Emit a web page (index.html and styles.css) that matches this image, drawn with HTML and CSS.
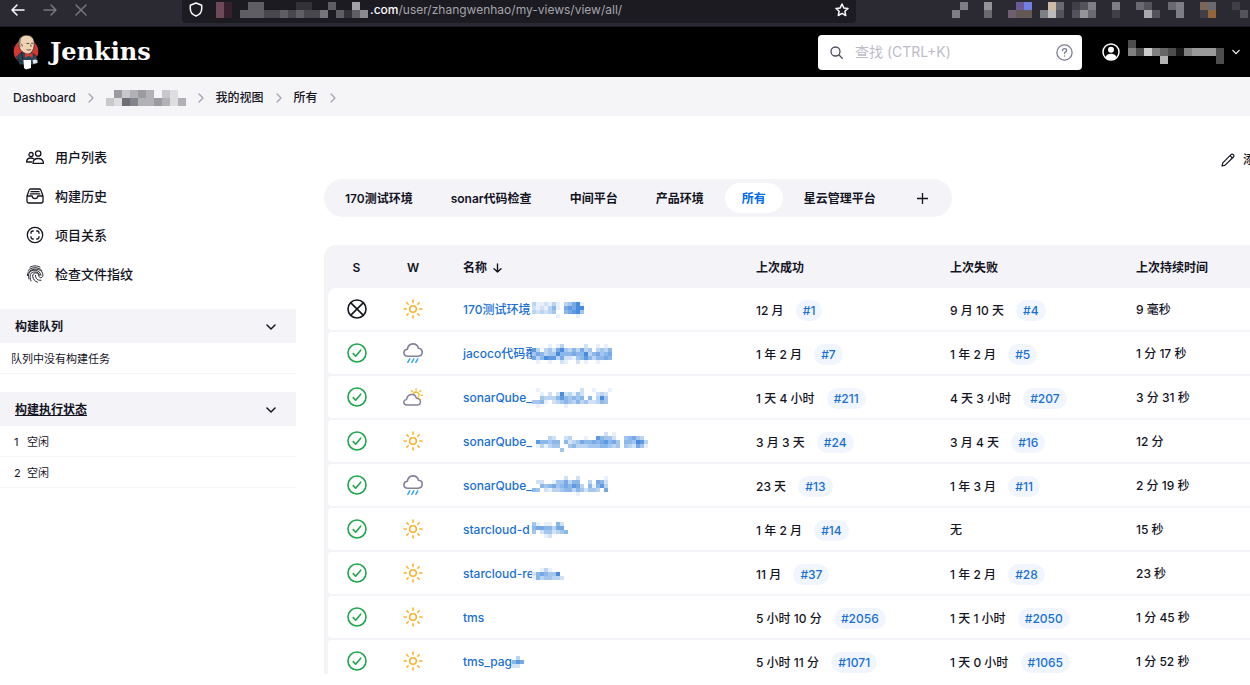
FILE: index.html
```html
<!DOCTYPE html>
<html lang="zh-CN">
<head>
    <meta charset="UTF-8">
    <meta name="viewport" content="width=device-width, initial-scale=1.0">
    <title>所有 [Jenkins]</title>
    <link rel="stylesheet" href="styles.css">
</head>
<body>
    <svg class="symbols" aria-hidden="true">
        <symbol id="chevron-right" viewBox="0 0 6 10"><path d="M1 1l4 4-4 4" fill="none" stroke="currentColor" stroke-width="1.3" stroke-linecap="round" stroke-linejoin="round"/></symbol>
        <symbol id="chevron-down" viewBox="0 0 10 6"><path d="M1 1l4 4 4-4" fill="none" stroke="currentColor" stroke-width="1.5" stroke-linecap="round" stroke-linejoin="round"/></symbol>
        <symbol id="ok" viewBox="0 0 20 20"><g fill="none" stroke="#1ea64b" stroke-width="1.6" stroke-linecap="round" stroke-linejoin="round"><circle cx="10" cy="10" r="9"/><path d="M6.2 10.6l2.5 2.6 5-6"/></g></symbol>
        <symbol id="aborted" viewBox="0 0 20 20"><g fill="none" stroke="#14141f" stroke-width="1.6" stroke-linecap="round"><circle cx="10" cy="10" r="9"/><path d="M4.6 4.6l10.8 10.8M15.4 4.6L4.6 15.4"/></g></symbol>
        <symbol id="sunny" viewBox="0 0 20 20"><g fill="none" stroke="#fcb32c" stroke-width="1.6" stroke-linecap="round"><circle cx="10" cy="10" r="3.3"/><path d="M10 1v2.2M10 16.8V19M1 10h2.2M16.8 10H19M3.8 3.8l1.4 1.4M14.8 14.8l1.4 1.4M3.8 16.2l1.4-1.4M14.8 5.2l1.4-1.4"/></g></symbol>
        <symbol id="rainy" viewBox="0 0 20 20"><path d="M5 13.2C2.500 13.200.9 11.700.9 9.800c0-1.900 1.300-3.200 3.400-3.500C4.900 2.900 7.100.9 10 .9c2.700 0 4.700 1.600 5.400 4.300 2.400.2 3.800 1.700 3.800 3.900 0 2.400-1.600 4.100-4.100 4.100z" fill="none" stroke="#82819a" stroke-width="1.6" stroke-linejoin="round"/><path d="M6.800 15.800l-2 3.500M10.800 15.800l-2 3.500M14.800 15.800l-2 3.500" fill="none" stroke="#36a6e8" stroke-width="1.500" stroke-linecap="round"/></symbol>
        <symbol id="cloudy" viewBox="0 0 22 20"><g fill="none" stroke-linecap="round" stroke-linejoin="round"><path d="M11.300 6.200a3.400 3.400 0 1 1 5 4.400M14.400 1v1.300M9.300 3.200l1 .9M19.500 3.200l-1 .9M20 8.200h1.400M19.300 13l-1-.9" stroke="#fcb32c" stroke-width="1.500"/><path d="M4.500 18.900C2.200 18.900.9 17.600.9 15.900c0-1.700 1.200-2.800 3-3C4.400 9.200 6.700 7.200 9.600 7.200c2.800 0 4.600 1.700 5.100 4.300 2.500.1 4.500 1.400 4.500 3.800 0 2.200-1.500 3.600-3.800 3.600z" stroke="#82819a" stroke-width="1.600"/></g></symbol>
    </svg>

    <div class="browser-bar">
        <div class="browser-nav">
            <button class="nav-button" aria-label="后退"><svg width="14" height="12" viewBox="0 0 14 12"><path d="M13 6H1M6 1L1 6l5 5"/></svg></button>
            <button class="nav-button dim" aria-label="前进"><svg width="14" height="12" viewBox="0 0 14 12"><path d="M1 6h12M8 1l5 5-5 5"/></svg></button>
            <button class="nav-button dim" aria-label="停止"><svg width="12" height="12" viewBox="0 0 12 12"><path d="M1 1l10 10M11 1L1 11"/></svg></button>
        </div>
        <div class="address">
            <svg class="shield" width="14" height="15" viewBox="0 0 14 15"><path d="M7 1l5.700 2.200v3.600c0 3.200-2.300 6-5.700 7.200-3.400-1.200-5.700-4-5.700-7.200V3.200z"/></svg>
            <span class="mosaic" data-size="8" data-rows="md..33....11..3..6.|md.33322323224.3135"></span>
            <span class="url"><b>.com</b>/user/zhangwenhao/my-views/view/all/</span>
            <button class="star" aria-label="收藏"><svg width="14" height="14" viewBox="0 0 14 14"><path d="M7 1l1.800 3.900 4.200.5-3.100 2.900.8 4.200L7 10.400l-3.700 2.100.8-4.200L1 5.400l4.200-.5z"/></svg></button>
        </div>
        <span class="mosaic extensions" data-size="8" data-rows=".4..5...pb..t3.124..4..32..34..n3..1.|4...3..qrr.4g2.253..1...62..4..1o...2"></span>
    </div>

    <header class="page-header">
        <a class="logo" href="#" aria-label="Jenkins">
            <svg width="26" height="36" viewBox="0 0 26 36">
                <circle cx="13" cy="17.500" r="12.300" fill="#d33833"/>
                <path d="M3.500 23L8 18.500h10.500L23.500 22l1 5.500-3.500 3H6.500z" fill="#2c4658" stroke="#10181f" stroke-width=".6"/>
                <path d="M5.800 8C6.500 3.500 9.800 1 14 1.200c4.200.2 7 3 7.200 7.300.2 4.500-.8 8.300-3.800 10.800-1.600 1.200-4 .8-6.500-.6C7.600 17 6.200 14 5.800 11z" fill="#efd2b2" stroke="#2b2523" stroke-width=".7"/>
                <path d="M5.500 11C4.900 7.500 6 4.500 8.800 2.800 7.700 5 7.400 6.500 7.600 8.200c-.6 1.800-.5 3.300.4 5-1.300-.2-2.100-1-2.500-2.200z" fill="#81746a"/>
                <path d="M13.500 9.500h2.800M18.200 9.300h2M13.500 15.500c1.500.8 3.500.7 4.500 0M17.600 10.500l.6 2.300M8.200 10.500c.8-.5 1.500.5.800 2" fill="none" stroke="#3a2d28" stroke-width=".8"/>
                <path d="M15.800 20.500L12 19v4.500l3.800-1.500 3.800 1.500V19z" fill="#e03a34"/>
                <path d="M10.500 26h7.500v8l-5 1.500-2-1.500z" fill="#fff"/>
                <path d="M19.500 26.500c1.500-1.500 3.500-1.500 5 0v2.500l-4 1z" fill="#dfe3e8"/>
                <path d="M8.500 19l1.500 7M4.800 25l4.500 3.500" fill="none" stroke="#10181f" stroke-width=".8"/>
            </svg>
            <span class="logo-text">Jenkins</span>
        </a>
        <div class="search">
            <svg width="13" height="13" viewBox="0 0 13 13"><circle cx="5.500" cy="5.500" r="4.500"/><path d="M9 9l3.300 3.300"/></svg>
            <input type="text" id="search-box" placeholder="查找 (CTRL+K)" aria-label="查找">
            <button class="help" aria-label="帮助"><svg width="17" height="17" viewBox="0 0 17 17"><circle cx="8.500" cy="8.500" r="7.600"/><path d="M6.500 6.600c0-1.200.9-1.900 2.100-1.900s2 .7 2 1.700c0 1.500-2.100 1.500-2.100 3.200"/><path d="M8.500 11.900v.2"/></svg></button>
        </div>
        <button class="user" aria-label="用户菜单">
            <svg width="18" height="18" viewBox="0 0 18 18"><circle cx="9" cy="9" r="8" fill="none" stroke="#fff" stroke-width="1.500"/><circle cx="9" cy="6.800" r="3" fill="#fff"/><path d="M3.600 14c.8-2.300 2.800-3.300 5.400-3.300s4.600 1 5.400 3.300C13 15.800 11 16.700 9 16.700S5 15.800 3.600 14z" fill="#fff"/></svg>
            <span class="mosaic" data-size="8" data-rows="3...........|538543156663|....7......3"></span>
            <svg width="8" height="6"><use href="#chevron-down"/></svg>
        </button>
    </header>

    <nav class="breadcrumbs">
        <a href="#">Dashboard</a>
        <svg><use href="#chevron-right"/></svg>
        <a class="mosaic" href="#" aria-label="用户" data-size="8" data-rows=".423430210|2165334313"></a>
        <svg><use href="#chevron-right"/></svg>
        <a href="#">我的视图</a>
        <svg><use href="#chevron-right"/></svg>
        <a href="#">所有</a>
        <svg><use href="#chevron-right"/></svg>
    </nav>

    <div class="page-body">
        <aside class="side-panel">
            <nav class="tasks">
                <a class="task" href="#">
                    <svg viewBox="0 0 18 18"><circle cx="12.200" cy="5.500" r="2.700"/><path d="M6.900 15.300c.2-3 2.300-4.800 5.300-4.800s5.100 1.800 5.300 4.800z"/><circle cx="5" cy="6.600" r="2.100"/><path d="M5.600 14H.6c.1-2.600 1.700-4 4.300-4 1.100 0 1.900.2 2.700.7"/></svg>
                    <span>用户列表</span>
                </a>
                <a class="task" href="#">
                    <svg viewBox="0 0 18 18"><path d="M1 9l2-5.600C3.300 2.500 3.800 2 4.700 2h8.600c.9 0 1.400.5 1.700 1.400L17 9v5c0 1.200-.8 2-2 2H3c-1.200 0-2-.8-2-2zM1 9h5.200c.2 1.700 1.300 2.600 2.800 2.600s2.600-.9 2.800-2.600H17M5 4.700h8M4.200 6.900h9.600"/></svg>
                    <span>构建历史</span>
                </a>
                <a class="task" href="#">
                    <svg viewBox="0 0 18 18"><circle cx="9" cy="9" r="7.700"/><path d="M7.300 5H6.700C5.600 5 5 5.600 5 6.700v.6M10.700 5h.6c1.100 0 1.700.6 1.700 1.700v.6M7.300 13h-.6C5.600 13 5 12.400 5 11.300v-.6M10.700 13h.6c1.100 0 1.700-.6 1.700-1.700v-.6"/></svg>
                    <span>项目关系</span>
                </a>
                <a class="task" href="#">
                    <svg class="fingerprint" viewBox="0 0 18 18"><path d="M4 2.200C7 .4 11 .4 14 2.200M2 5.700C5.300 1.600 12.700 1.600 16 5.700M1.300 10.600C.9 2.400 17.200 1.700 16.900 10.300c0 2-1.900 3-3.300 2-.8-.6-.8-1.300-1-2.300-.6-3-6-2.700-5.900 1 .1 3.300 2.200 5.300 4.800 6.200M3 14c-.5-1.800-.8-3.500-.2-5.200 1.800-5.200 11.500-4.900 12.200 1.500M5 15.900c-.8-2.200-1.200-4.200-.7-6.200 1.300-4 8.900-3.600 9.300.4M9.500 10.300c-.1 3.200 1.800 5.300 5.500 5"/></svg>
                    <span>检查文件指纹</span>
                </a>
            </nav>

            <section class="pane">
                <div class="pane-header">
                    <h2>构建队列</h2>
                    <button aria-label="折叠"><svg width="10" height="6"><use href="#chevron-down"/></svg></button>
                </div>
                <p class="pane-empty">队列中没有构建任务</p>
            </section>

            <section class="pane">
                <div class="pane-header">
                    <h2><a href="#">构建执行状态</a></h2>
                    <button aria-label="折叠"><svg width="10" height="6"><use href="#chevron-down"/></svg></button>
                </div>
                <ul class="executors">
                    <li><span>1</span>空闲</li>
                    <li><span>2</span>空闲</li>
                </ul>
            </section>
        </aside>

        <main class="main-panel">
            <div class="description">
                <a href="#">
                    <svg width="14" height="14" viewBox="0 0 14 14"><path d="M1 13l.8-3.200L10 1.600c.7-.7 1.500-.7 2.100-.1l.4.4c.6.6.6 1.400-.1 2.100L4.200 12.200zM9 2.600L11.400 5"/></svg>
                    <span>添加说明</span>
                </a>
            </div>

            <nav class="tabs">
                <a href="#">170测试环境</a>
                <a href="#">sonar代码检查</a>
                <a href="#">中间平台</a>
                <a href="#">产品环境</a>
                <a class="active" href="#">所有</a>
                <a href="#">星云管理平台</a>
                <a class="add" href="#" aria-label="新建视图"><svg width="11" height="11" viewBox="0 0 11 11"><path d="M5.500 0v11M0 5.500h11"/></svg></a>
            </nav>

            <table class="projects">
                <colgroup>
                    <col class="col-status">
                    <col class="col-weather">
                    <col class="col-name">
                    <col class="col-success">
                    <col class="col-failure">
                    <col>
                </colgroup>
                <thead>
                    <tr>
                        <th class="icon">S</th>
                        <th class="icon">W</th>
                        <th>名称 <svg class="sort" width="9" height="10" viewBox="0 0 9 10"><path d="M4.500 1v8M1 5.700L4.500 9 8 5.700"/></svg></th>
                        <th>上次成功</th>
                        <th>上次失败</th>
                        <th>上次持续时间</th>
                    </tr>
                </thead>
                <tbody>
                    <tr>
                        <td class="icon"><svg><use href="#aborted"/></svg></td>
                        <td class="icon"><svg><use href="#sunny"/></svg></td>
                        <td><a class="name" href="#"><span class="visible">170测试环境</span><span class="mosaic" data-size="4" data-rows="3112131.34681|2121351.67688|323234..56784|......1....1."></span></a></td>
                        <td>12 月 <a class="build" href="#">#1</a></td>
                        <td>9 月 10 天 <a class="build" href="#">#4</a></td>
                        <td>9 毫秒</td>
                    </tr>
                    <tr>
                        <td class="icon"><svg><use href="#ok"/></svg></td>
                        <td class="icon"><svg><use href="#rainy"/></svg></td>
                        <td><a class="name" href="#"><span class="visible">jacoco代码覆</span><span class="mosaic" data-size="4" data-rows="....1.13.....2..1.1.|73.342684353634.3435|46534485556558356456|63587736221457535565|.1..1..21..2.1..1..."></span></a></td>
                        <td>1 年 2 月 <a class="build" href="#">#7</a></td>
                        <td>1 年 2 月 <a class="build" href="#">#5</a></td>
                        <td>1 分 17 秒</td>
                    </tr>
                    <tr>
                        <td class="icon"><svg><use href="#ok"/></svg></td>
                        <td class="icon"><svg><use href="#cloudy"/></svg></td>
                        <td><a class="name" href="#"><span class="visible">sonarQube_</span><span class="mosaic" data-size="4" data-rows=".1..........2..1...1|..1.2.2823142...232.|..43335754545.5.384.|4451.23454353422354.|.1......1..........."></span></a></td>
                        <td>1 天 4 小时 <a class="build" href="#">#211</a></td>
                        <td>4 天 3 小时 <a class="build" href="#">#207</a></td>
                        <td>3 分 31 秒</td>
                    </tr>
                    <tr>
                        <td class="icon"><svg><use href="#ok"/></svg></td>
                        <td class="icon"><svg><use href="#sunny"/></svg></td>
                        <td><a class="name" href="#"><span class="visible">sonarQube_</span><span class="mosaic" data-size="4" data-rows="..................2.1........|....32..23...1..75442..45643.|.755455.52346556567564.554873|.131344..4533344455434.432641|.......4....................."></span></a></td>
                        <td>3 月 3 天 <a class="build" href="#">#24</a></td>
                        <td>3 月 4 天 <a class="build" href="#">#16</a></td>
                        <td>12 分</td>
                    </tr>
                    <tr>
                        <td class="icon"><svg><use href="#ok"/></svg></td>
                        <td class="icon"><svg><use href="#rainy"/></svg></td>
                        <td><a class="name" href="#"><span class="visible">sonarQube_</span><span class="mosaic" data-size="4" data-rows="........2..2......1|.22..1446355..3.652|..54564565763.51573|54.21334553542443.6|...........1......."></span></a></td>
                        <td>23 天 <a class="build" href="#">#13</a></td>
                        <td>1 年 3 月 <a class="build" href="#">#11</a></td>
                        <td>2 分 19 秒</td>
                    </tr>
                    <tr>
                        <td class="icon"><svg><use href="#ok"/></svg></td>
                        <td class="icon"><svg><use href="#sunny"/></svg></td>
                        <td><a class="name" href="#"><span class="visible">starcloud-d</span><span class="mosaic" data-size="4" data-rows="41.11.52.|56655366.|4.2442345|...12...."></span></a></td>
                        <td>1 年 2 月 <a class="build" href="#">#14</a></td>
                        <td>无</td>
                        <td>15 秒</td>
                    </tr>
                    <tr>
                        <td class="icon"><svg><use href="#ok"/></svg></td>
                        <td class="icon"><svg><use href="#sunny"/></svg></td>
                        <td><a class="name" href="#"><span class="visible">starcloud-re</span><span class="mosaic" data-size="4" data-rows="..131...|2565448.|15344332"></span></a></td>
                        <td>11 月 <a class="build" href="#">#37</a></td>
                        <td>1 年 2 月 <a class="build" href="#">#28</a></td>
                        <td>23 秒</td>
                    </tr>
                    <tr>
                        <td class="icon"><svg><use href="#ok"/></svg></td>
                        <td class="icon"><svg><use href="#sunny"/></svg></td>
                        <td><a class="name" href="#">tms</a></td>
                        <td>5 小时 10 分 <a class="build" href="#">#2056</a></td>
                        <td>1 天 1 小时 <a class="build" href="#">#2050</a></td>
                        <td>1 分 45 秒</td>
                    </tr>
                    <tr>
                        <td class="icon"><svg><use href="#ok"/></svg></td>
                        <td class="icon"><svg><use href="#sunny"/></svg></td>
                        <td><a class="name" href="#"><span class="visible short">tms_pag</span><span class="mosaic" data-size="4" data-rows=".3.|576|22."></span></a></td>
                        <td>5 小时 11 分 <a class="build" href="#">#1071</a></td>
                        <td>1 天 0 小时 <a class="build" href="#">#1065</a></td>
                        <td>1 分 52 秒</td>
                    </tr>
                </tbody>
            </table>
        </main>
    </div>

    <script src="mosaic.js"></script>
</body>
</html>
```

FILE: styles.css
```css
* {
    box-sizing: border-box;
}
body {
    margin: 0;
    padding-bottom: 11px;
    height: 100vh;
    display: flex;
    flex-direction: column;
    overflow: hidden;
    background-color: #fff;
    color: #14141f;
    font-family: Inter, "Noto Sans CJK SC", sans-serif;
    font-size: 12px;
    font-weight: 500;
    line-height: 18px;
}
a {
    color: inherit;
    text-decoration: none;
}
button {
    padding: 0;
    border: none;
    background: none;
    color: inherit;
    font: inherit;
    cursor: pointer;
}
svg {
    display: block;
    flex: none;
}
.symbols {
    position: absolute;
    width: 0;
    height: 0;
}
.mosaic {
    flex: none;
}

/* browser toolbar */
.browser-bar {
    flex: none;
    display: flex;
    align-items: flex-start;
    height: 27px;
    background-color: #2b2a33;
    border-bottom: 1px solid #1c1b22;
    color: #fbfbfe;
}
.browser-bar svg {
    fill: none;
    stroke: currentColor;
    stroke-width: 1.5;
    stroke-linecap: round;
    stroke-linejoin: round;
}
.browser-nav {
    display: flex;
    gap: 18px;
    width: 182px;
    padding: 4px 11px;
}
.nav-button.dim {
    color: #77767e;
}
.address {
    flex: 1;
    display: flex;
    align-items: center;
    height: 23px;
    padding: 0 7px 4px;
    background-color: #1c1b22;
    border-radius: 0 0 4px 4px;
}
.shield {
    margin-right: 13px;
}
.url {
    margin-left: 2px;
    color: #a5a5ab;
    font-weight: 400;
    white-space: nowrap;
}
.url b {
    color: #fbfbfe;
    font-weight: 500;
}
.star {
    margin-left: auto;
}
.extensions {
    margin: 2px 2px 0 96px;
}
.browser-bar .mosaic svg {
    stroke: none;
}
.mosaic svg {
    fill: currentColor;
}

/* header */
.page-header {
    flex: none;
    display: flex;
    align-items: center;
    height: 50px;
    padding: 0 10px 0 13px;
    background-color: #000;
    color: #fff;
}
.logo {
    display: flex;
    align-items: center;
    gap: 11px;
    margin-right: auto;
}
.logo-text {
    font-family: "DejaVu Serif", serif;
    font-size: 24px;
    font-weight: 700;
}
.search {
    display: flex;
    align-items: center;
    gap: 12px;
    width: 264px;
    height: 35px;
    margin-right: 20px;
    padding: 0 9px 0 12px;
    background-color: #fff;
    border-radius: 4px;
    color: #4d4d5c;
}
.search svg {
    fill: none;
    stroke: currentColor;
    stroke-width: 1.3;
    stroke-linecap: round;
}
.search input {
    flex: 1;
    min-width: 0;
    padding: 0;
    border: none;
    outline: none;
    font: inherit;
    font-size: 14px;
    font-weight: 400;
}
.search input::placeholder {
    color: #bcbcc8;
}
.help {
    color: #7b7b96;
}
.user {
    display: flex;
    align-items: center;
    gap: 8px;
}

/* breadcrumbs */
.breadcrumbs {
    flex: none;
    display: flex;
    align-items: center;
    gap: 12px;
    height: 39px;
    padding: 2px 13px 0;
    background-color: #f5f5f8;
}
.breadcrumbs > svg {
    width: 6px;
    height: 10px;
    color: #a3a3b5;
}

/* body */
.page-body {
    flex: 1;
    min-height: 0;
    display: flex;
    gap: 28px;
    overflow: hidden;
}
.side-panel {
    flex: none;
    width: 296px;
    padding-top: 21px;
}
.tasks {
    margin-bottom: 16px;
}
.task {
    display: flex;
    align-items: center;
    gap: 11px;
    height: 39px;
    padding-left: 26px;
    font-size: 13px;
}
.task svg {
    width: 18px;
    height: 18px;
    fill: none;
    stroke: currentColor;
    stroke-width: 1.3;
    stroke-linecap: round;
    stroke-linejoin: round;
}
.task .fingerprint {
    stroke-width: 0.9;
}
.pane {
    margin-bottom: 18px;
}
.pane-header {
    display: flex;
    align-items: center;
    justify-content: space-between;
    height: 34px;
    padding: 2px 20px 0 15px;
    background-color: #f3f3f8;
}
.pane-header h2 {
    margin: 0;
    font-size: 12px;
    font-weight: 700;
}
.pane-header a {
    text-decoration: underline;
}
.pane-empty {
    margin: 0;
    padding: 7px 11px 5px;
    border-bottom: 1px solid #f5f5f8;
    font-size: 11px;
    font-weight: 400;
}
.executors {
    margin: 0;
    padding: 0;
    list-style: none;
    font-size: 11px;
    font-weight: 400;
}
.executors li {
    display: flex;
    gap: 6px;
    padding: 7px 14px 5px;
    border-bottom: 1px solid #f5f5f8;
}
.executors span {
    width: 7px;
}

/* main panel */
.main-panel {
    flex: 1 0 967px;
    padding-top: 26px;
}
.description {
    display: flex;
    justify-content: flex-end;
    height: 37px;
    padding-top: 9px;
}
.description a {
    display: flex;
    align-items: center;
    gap: 8px;
    height: 18px;
}
.description svg {
    fill: none;
    stroke: currentColor;
    stroke-width: 1.2;
    stroke-linejoin: round;
}
.tabs {
    display: flex;
    width: max-content;
    gap: 4px;
    padding: 4px;
    background-color: #f3f3f8;
    border-radius: 19px;
    font-weight: 600;
}
.tabs a {
    display: flex;
    align-items: center;
    height: 30px;
    padding: 2px 17px 0;
    border-radius: 15px;
}
.tabs .active {
    background-color: #fff;
    color: #006be6;
}
.tabs .add {
    padding: 0 20px;
}
.tabs svg {
    stroke: currentColor;
    stroke-width: 1.3;
}

.projects {
    width: 100%;
    margin-top: 28px;
    padding-left: 4px;
    table-layout: fixed;
    border-collapse: separate;
    border-spacing: 0 2px;
    background-color: #f3f3f8;
    border-radius: 12px;
    white-space: nowrap;
}
.col-status {
    width: 57px;
}
.col-weather {
    width: 56px;
}
.col-name {
    width: 293px;
}
.col-success {
    width: 194px;
}
.col-failure {
    width: 186px;
}
.projects th {
    height: 39px;
    padding: 2px 0 0 22px;
    text-align: left;
    font-weight: 600;
}
.projects td {
    height: 42px;
    padding: 2px 0 0 22px;
    background-color: #fff;
}
.projects .icon {
    padding-left: 0;
    text-align: center;
}
.projects td.icon {
    padding-top: 0;
}
.projects td:first-child {
    border-radius: 4px 0 0 4px;
}
.projects tbody tr:first-child td:first-child {
    border-top-left-radius: 8px;
}
.icon svg {
    width: 20px;
    height: 20px;
    margin: 0 auto;
}
.sort {
    display: inline-block;
    margin-left: 3px;
    vertical-align: -1px;
    fill: none;
    stroke: currentColor;
    stroke-width: 1.4;
    stroke-linecap: round;
    stroke-linejoin: round;
}
.name {
    display: flex;
    align-items: center;
    color: #1a6fd4;
}
.name .mosaic {
    background-color: #fff;
}
.visible {
    width: 69px;
}
.visible.short {
    width: 49px;
}
.build {
    display: inline-block;
    height: 21px;
    margin-left: 9px;
    padding: 0 7px;
    line-height: 21px;
    background-color: #f1f6fe;
    border-radius: 11px;
    color: #1a6fd4;
}
```

FILE: mosaic.js
```javascript
// letters are fixed colours, digits are tenths of opacity of the text colour
const colours = {
    m: '#6e4a58', d: '#35202b', p: '#6c5a94', b: '#727ee0', t: '#cdbba7',
    g: '#bdbbb9', q: '#6f6070', r: '#645854', n: '#7a6659', o: '#94643a'
};

document.querySelectorAll('.mosaic').forEach(el => {
    const size = Number(el.dataset.size);
    const rows = el.dataset.rows.split('|');
    const width = Math.max(...rows.map(row => row.length)) * size;
    let cells = '';

    rows.forEach((row, y) => {
        [...row].forEach((cell, x) => {
            if (cell === '.') return;
            const paint = colours[cell] ? `fill="${colours[cell]}"` : `fill-opacity="${cell / 10}"`;
            cells += `<rect x="${x * size}" y="${y * size}" width="${size}" height="${size}" ${paint}/>`;
        });
    });

    el.innerHTML = `<svg width="${width}" height="${rows.length * size}" shape-rendering="crispEdges">${cells}</svg>`;
});
```
